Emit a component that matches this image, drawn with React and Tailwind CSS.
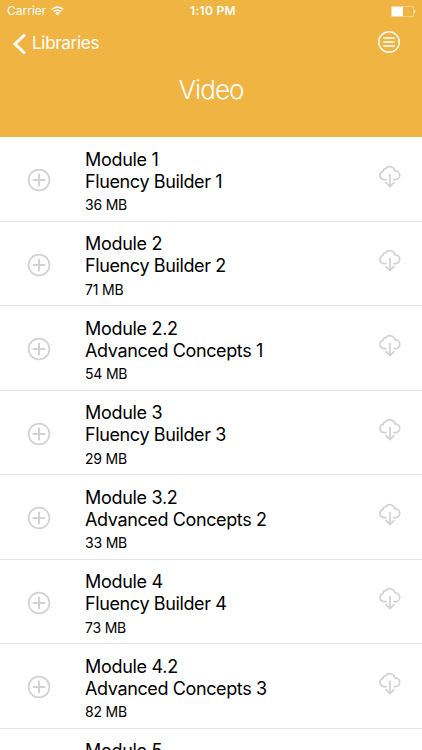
import React from "react";

const modules = [
  { title: "Module 1", subtitle: "Fluency Builder 1", size: "36 MB" },
  { title: "Module 2", subtitle: "Fluency Builder 2", size: "71 MB" },
  { title: "Module 2.2", subtitle: "Advanced Concepts 1", size: "54 MB" },
  { title: "Module 3", subtitle: "Fluency Builder 3", size: "29 MB" },
  { title: "Module 3.2", subtitle: "Advanced Concepts 2", size: "33 MB" },
  { title: "Module 4", subtitle: "Fluency Builder 4", size: "73 MB" },
  { title: "Module 4.2", subtitle: "Advanced Concepts 3", size: "82 MB" },
  { title: "Module 5", subtitle: "", size: "" },
];

const WifiIcon = () => (
  <svg width="13" height="10" viewBox="0 0 13 10" fill="none" stroke="currentColor">
    <path d="M0.8 3.5a8.2 8.2 0 0 1 11.4 0" strokeWidth="1.7" />
    <path d="M2.8 5.7a5.3 5.3 0 0 1 7.4 0" strokeWidth="1.6" />
    <path d="M6.5 9.5L4.3 7.2a3 3 0 0 1 4.4 0z" fill="currentColor" stroke="none" />
  </svg>
);

const BatteryIcon = () => (
  <svg width="25" height="11" viewBox="0 0 25 11" fill="none">
    <rect x="0.4" y="0.4" width="22.2" height="10.2" rx="0.8" stroke="currentColor" strokeWidth="0.7" opacity="0.6" />
    <rect x="0.8" y="0.8" width="11.2" height="9.4" fill="currentColor" />
    <path d="M23.4 3.7c1.4.4 1.4 3.2 0 3.6z" fill="currentColor" />
  </svg>
);

const MenuIcon = () => (
  <svg width="24" height="24" viewBox="0 0 24 24" fill="none" stroke="currentColor">
    <circle cx="12" cy="12" r="10.3" strokeWidth="1.4" />
    <path d="M6.3 8h11.4M6.3 12h11.4M6.3 16h11.4" strokeWidth="1.5" />
  </svg>
);

const AddIcon = () => (
  <svg width="24" height="24" viewBox="0 0 24 24" fill="none" stroke="currentColor">
    <circle cx="12" cy="12" r="10.4" strokeWidth="1.7" />
    <path d="M12 5.7v12.6M5.7 12h12.6" strokeWidth="2" />
  </svg>
);

const DownloadIcon = () => (
  <svg width="24" height="24" viewBox="0 0 24 24" fill="none" stroke="currentColor" strokeWidth="1.7">
    <path d="M8.7 15.6H5.9a4.2 4.2 0 0 1-.9-8.2A3.1 3.1 0 0 1 7.6 4.7a5.3 5.3 0 0 1 9.4 2.2 4.4 4.4 0 0 1 1.2 8.7h-2.9" />
    <path d="M12 9.8v12.4M7.6 18.2l4.4 4.3 4.4-4.3" />
  </svg>
);

const ModuleRow = ({ title, subtitle, size }) => (
  <li className="flex h-[84.5px] border-b border-[#e3e3e5]">
    <button className="flex w-[85px] shrink-0 items-center pl-[27px] pt-[3px] text-[#d1d2d7]">
      <AddIcon />
    </button>
    <div className="flex-1 pt-[11.5px] text-black">
      <p className="text-[18px] leading-[22px] tracking-[-0.3px]">{title}</p>
      <p className="text-[18px] leading-[22px] tracking-[-0.38px]">{subtitle}</p>
      <p className="mt-[3.5px] text-[14px] leading-[17px] tracking-[-0.2px]">{size}</p>
    </div>
    <button className="mr-5 flex items-start pt-[26.5px] text-[#d1d2d7]">
      <DownloadIcon />
    </button>
  </li>
);

const App = () => {
  return (
    <div className="h-[750px] w-[422px] overflow-hidden bg-white font-['Inter',sans-serif]">
      <header className="h-[137px] bg-[#f0b443] text-white">
        {/* Status bar */}
        <div className="grid h-[22px] grid-cols-3 items-center pl-[7px] pr-[6px] text-[12px]">
          <div className="flex items-center gap-[5px]">
            <span>Carrier</span>
            <WifiIcon />
          </div>
          <span className="pl-[3px] text-center font-semibold tracking-[0.3px]">1:10 PM</span>
          <div className="flex justify-end">
            <BatteryIcon />
          </div>
        </div>

        {/* Navigation */}
        <div className="flex h-[44px] items-center justify-between border-b border-[#f2b54b] pl-3 pr-[21px]">
          <button className="flex items-center gap-[5px] text-[17px] tracking-[-0.3px]">
            <svg width="15" height="22" viewBox="0 0 15 22" fill="none" stroke="currentColor">
              <path d="M13 1.5L3 11l10 9.5" strokeWidth="3" />
            </svg>
            Libraries
          </button>
          <button className="pb-1">
            <MenuIcon />
          </button>
        </div>

        <h1 className="pt-[8px] text-center text-[26px] font-[350] leading-8 tracking-[-0.9px]">Video</h1>
      </header>

      <ul>
        {modules.map((module) => (
          <ModuleRow key={module.title} {...module} />
        ))}
      </ul>
    </div>
  );
};

export default App;
